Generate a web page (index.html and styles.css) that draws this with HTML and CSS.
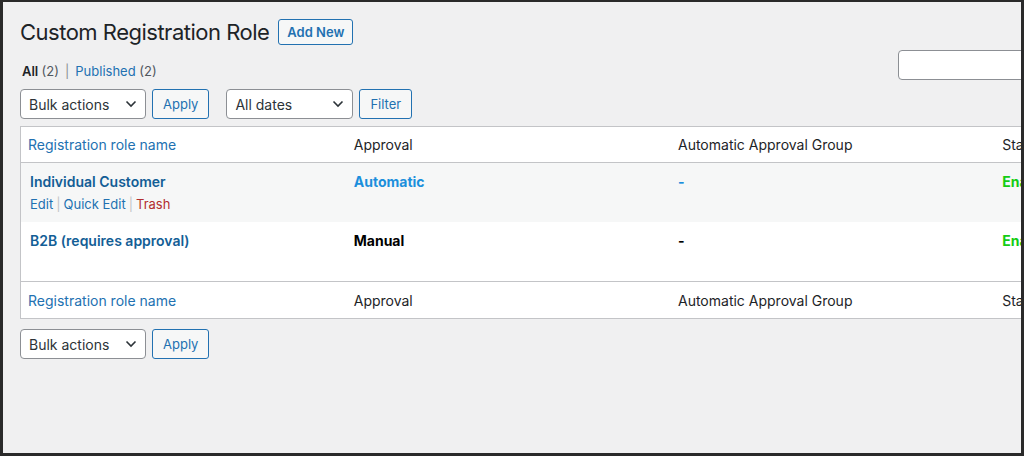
FILE: index.html
```html
<!DOCTYPE html>
<html lang="en">
<head>
    <meta charset="UTF-8">
    <title>Custom Registration Role</title>
    <link rel="stylesheet" href="styles.css">
</head>
<body>
    <div class="screen">
        <div class="wrap">
            <div class="page-head">
                <h1>Custom Registration Role</h1>
                <a class="btn btn-add" href="#">Add New</a>
            </div>

            <div class="views-row">
                <ul class="subsubsub">
                    <li class="current">All <span class="count">(2)</span></li>
                    <li class="sep">|</li>
                    <li><a href="#">Published</a> <span class="count">(2)</span></li>
                </ul>
                <div class="search-box">
                    <input type="search" class="search-input">
                    <span class="btn">Search Registration Roles</span>
                </div>
            </div>

            <div class="tablenav">
                <div class="select sel-bulk">Bulk actions
                    <svg width="12" height="8" viewBox="0 0 12 8"><path d="M1.5 1.5 L6 6 L10.5 1.5" fill="none" stroke="#2c3338" stroke-width="1.6"/></svg>
                </div>
                <span class="btn">Apply</span>
                <div class="select sel-dates">All dates
                    <svg width="12" height="8" viewBox="0 0 12 8"><path d="M1.5 1.5 L6 6 L10.5 1.5" fill="none" stroke="#2c3338" stroke-width="1.6"/></svg>
                </div>
                <span class="btn">Filter</span>
            </div>

            <table class="list-table">
                <colgroup>
                    <col class="c-name">
                    <col class="c-std">
                    <col class="c-std">
                    <col class="c-std">
                </colgroup>
                <thead>
                    <tr>
                        <th class="col-name"><a href="#">Registration role name</a></th>
                        <th>Approval</th>
                        <th>Automatic Approval Group</th>
                        <th>Status</th>
                    </tr>
                </thead>
                <tbody>
                    <tr class="alt">
                        <td class="col-name">
                            <a class="row-title" href="#">Individual Customer</a>
                            <div class="row-actions">
                                <a href="#">Edit</a><span class="pipe">|</span><a href="#">Quick Edit</a><span class="pipe">|</span><a class="trash" href="#">Trash</a>
                            </div>
                        </td>
                        <td><span class="auto">Automatic</span></td>
                        <td><span class="auto">-</span></td>
                        <td><span class="enabled">Enabled</span></td>
                    </tr>
                    <tr>
                        <td class="col-name">
                            <a class="row-title" href="#">B2B (requires approval)</a>
                            <div class="row-actions hidden">
                                <a href="#">Edit</a><span class="pipe">|</span><a href="#">Quick Edit</a><span class="pipe">|</span><a class="trash" href="#">Trash</a>
                            </div>
                        </td>
                        <td><strong>Manual</strong></td>
                        <td><strong>-</strong></td>
                        <td><span class="enabled">Enabled</span></td>
                    </tr>
                </tbody>
                <tfoot>
                    <tr>
                        <th class="col-name"><a href="#">Registration role name</a></th>
                        <th>Approval</th>
                        <th>Automatic Approval Group</th>
                        <th>Status</th>
                    </tr>
                </tfoot>
            </table>

            <div class="tablenav bottom">
                <div class="select sel-bulk">Bulk actions
                    <svg width="12" height="8" viewBox="0 0 12 8"><path d="M1.5 1.5 L6 6 L10.5 1.5" fill="none" stroke="#2c3338" stroke-width="1.6"/></svg>
                </div>
                <span class="btn">Apply</span>
            </div>
        </div>
    </div>
</body>
</html>
```

FILE: styles.css
```css
html, body {
    margin: 0;
    padding: 0;
}
body {
    font-family: 'Inter', 'Liberation Sans', sans-serif;
    color: #1d2327;
    background: #2a2a2a;
}
a {
    color: #2271b1;
    text-decoration: none;
}
.screen {
    width: 1024px;
    height: 456px;
    box-sizing: border-box;
    border: 3px solid #2a2a2a;
    border-top-width: 2px;
    background: #f0f0f1;
    overflow: hidden;
}
.wrap {
    width: 1310px;
    padding: 16px 0 0 17px;
}
.page-head {
    display: flex;
    align-items: center;
    gap: 9px;
}
h1 {
    margin: 0;
    font-size: 22px;
    font-weight: 400;
    letter-spacing: -0.5px;
    line-height: 28px;
    color: #1d2327;
}
.btn {
    display: inline-flex;
    align-items: center;
    box-sizing: border-box;
    height: 30px;
    padding: 0 10px;
    border: 1px solid #2271b1;
    border-radius: 3px;
    background: #f6f7f7;
    color: #2271b1;
    font-size: 13px;
    white-space: nowrap;
}
.btn-add {
    height: 26px;
    padding: 0 8px;
    font-weight: 600;
}
.views-row {
    display: flex;
    justify-content: space-between;
    align-items: flex-start;
    margin-top: 4px;
}
.subsubsub {
    list-style: none;
    margin: 12px 0 0 2px;
    padding: 0;
    display: flex;
    gap: 6px;
    font-size: 13px;
    line-height: 18px;
    color: #50575e;
}
.subsubsub .current {
    color: #1d2327;
    font-weight: 600;
}
.subsubsub .current .count {
    font-weight: 400;
    color: #50575e;
}
.subsubsub .sep {
    color: #8c8f94;
}
.search-box {
    display: flex;
    gap: 4px;
}
.search-input {
    width: 249px;
    height: 30px;
    box-sizing: border-box;
    border: 1px solid #8c8f94;
    border-radius: 4px;
    background: #fff;
}
.tablenav {
    display: flex;
    gap: 6px;
    margin-top: 9px;
}
.tablenav.bottom {
    margin-top: 10px;
}
.select {
    display: flex;
    align-items: center;
    justify-content: space-between;
    box-sizing: border-box;
    height: 30px;
    padding: 0 8px 0 8px;
    border: 1px solid #8c8f94;
    border-radius: 4px;
    background: #fff;
    color: #2c3338;
    font-size: 14px;
}
.sel-bulk {
    width: 126px;
}
.sel-dates {
    width: 127px;
    margin-left: 11px;
}
.list-table {
    margin-top: 7px;
    width: 1299px;
    border-collapse: collapse;
    table-layout: fixed;
    background: #fff;
    border: 1px solid #c3c4c7;
    font-size: 14px;
}
.c-name {
    width: 325px;
}
.c-std {
    width: 324px;
}
.list-table th {
    text-align: left;
    font-weight: 400;
    padding: 8px 8px;
    line-height: 19px;
    color: #1d2327;
}
.list-table th.col-name {
    padding-left: 7px;
}
.list-table thead th {
    border-bottom: 1px solid #c3c4c7;
}
.list-table tfoot th {
    border-top: 1px solid #c3c4c7;
    padding-top: 9px;
}
.list-table td {
    vertical-align: top;
    padding: 9px 8px 8px;
    line-height: 20px;
}
.list-table td.col-name {
    padding-left: 9px;
}
.list-table tr.alt td {
    background: #f6f7f7;
}
.row-title {
    font-weight: 600;
    color: #135e96;
}
.row-actions {
    padding-top: 2px;
    font-size: 13px;
    line-height: 20px;
}
.row-actions.hidden {
    visibility: hidden;
}
.row-actions .pipe {
    color: #c3c4c7;
    margin: 0 3px;
}
.row-actions .trash {
    color: #b32d2e;
}
.auto {
    color: #1b8fdc;
    font-weight: 700;
}
strong {
    font-weight: 700;
    color: #000;
}
.enabled {
    color: #14cc14;
    font-weight: 700;
}
```
